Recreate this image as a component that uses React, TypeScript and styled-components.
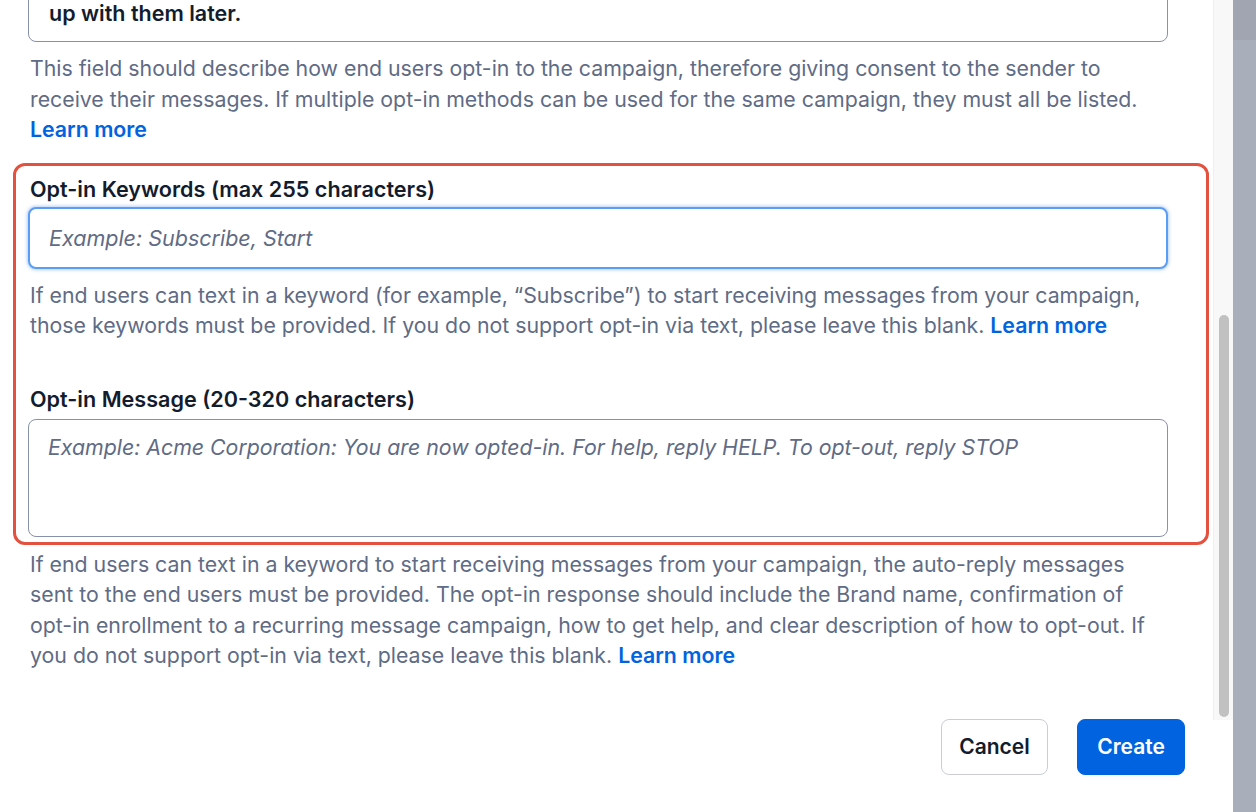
import styled, { createGlobalStyle } from "styled-components"

const GlobalStyle = createGlobalStyle`
  html, body {
    margin: 0;
    padding: 0;
    background: #fff;
    overflow: hidden;
  }
  body {
    font-family: 'Inter', 'Noto Sans', sans-serif;
    color: #121c2d;
  }
`

const Page = styled.div`
  display: flex;
  width: 1256px;
  height: 812px;
  overflow: hidden;
`

const Main = styled.main`
  width: 1213px;
  box-sizing: border-box;
  padding: 0 45px 0 28px;
  display: flex;
  flex-direction: column;
`

const FilledArea = styled.div`
  margin-top: -40px;
  padding: 37px 20px 13px;
  border: 1px solid #8891aa;
  border-radius: 8px;
  font-size: 21.5px;
  font-weight: 600;
  line-height: 30px;
  color: #121c2d;
`

const HelpText = styled.p<{ $top: number }>`
  margin: ${p => p.$top}px 0 0 2px;
  font-size: 21.3px;
  line-height: 30.5px;
  color: #606b85;
`

const Link = styled.a`
  color: #0263e0;
  font-weight: 600;
  text-decoration: none;
`

const Highlight = styled.section`
  margin: 18px -41px 0 -15px;
  padding: 11px 38px 5px 12px;
  border: 3px solid #e2523f;
  border-radius: 12px;
  display: flex;
  flex-direction: column;
`

const Label = styled.label<{ $top?: number }>`
  display: block;
  margin: ${p => p.$top ?? 0}px 0 0 2px;
  font-size: 21.6px;
  font-weight: 600;
  line-height: 24px;
  color: #121c2d;
`

const TextInput = styled.input`
  margin-top: 6px;
  height: 62px;
  box-sizing: border-box;
  padding: 0 19px;
  border: 2px solid #5b9cf5;
  border-radius: 8px;
  box-shadow: 0 0 0 1px #cfe1fb, 0 0 4px rgba(2, 99, 224, 0.45);
  font-family: inherit;
  font-size: 21.5px;
  color: #121c2d;
  outline: none;
  &::placeholder {
    color: #606b85;
    font-style: italic;
  }
`

const TextArea = styled.textarea`
  margin-top: 8px;
  height: 118px;
  box-sizing: border-box;
  padding: 13px 19px;
  border: 1px solid #8891aa;
  border-radius: 8px;
  font-family: inherit;
  font-size: 21.3px;
  line-height: 28px;
  resize: none;
  outline: none;
  &::placeholder {
    color: #606b85;
    font-style: italic;
  }
`

const Footer = styled.footer`
  margin: 48px -17px 0 0;
  display: flex;
  justify-content: flex-end;
  gap: 29px;
`

const Button = styled.button<{ $primary?: boolean }>`
  height: 56px;
  width: ${p => (p.$primary ? 108 : 107)}px;
  padding: 0;
  border-radius: 8px;
  font-family: inherit;
  font-size: 21px;
  font-weight: 600;
  cursor: pointer;
  border: 1px solid ${p => (p.$primary ? "#0263e0" : "#cacdd8")};
  background: ${p => (p.$primary ? "#0263e0" : "#fff")};
  color: ${p => (p.$primary ? "#fff" : "#121c2d")};
`

const ScrollColumn = styled.div`
  width: 20px;
  display: flex;
  flex-direction: column;
`

const Track = styled.div`
  height: 720px;
  background: #f8f8f8;
  border-left: 1px solid #efefef;
  box-sizing: border-box;
  display: flex;
  flex-direction: column;
  align-items: center;
  padding-top: 315px;
`

const Thumb = styled.div`
  width: 10px;
  height: 402px;
  border-radius: 5px;
  background: #c1c1c1;
`

const SidePanel = styled.div`
  flex: 1;
  background: linear-gradient(to bottom, #a1a5b2 0, #a1a5b2 40px, #a9aebb 40px);
`

export default function App() {
  return (
    <>
      <GlobalStyle />
      <Page>
        <Main>
          <FilledArea>up with them later.</FilledArea>
          <HelpText $top={11}>
            This field should describe how end users opt-in to the campaign, therefore giving consent to the sender to
            <br />
            receive their messages. If multiple opt-in methods can be used for the same campaign, they must all be listed.
            <br />
            <Link href="#">Learn more</Link>
          </HelpText>

          <Highlight>
            <Label htmlFor="keywords">Opt-in Keywords (max 255 characters)</Label>
            <TextInput id="keywords" placeholder="Example: Subscribe, Start" />
            <HelpText $top={11}>
              If end users can text in a keyword (for example, “Subscribe”) to start receiving messages from your campaign,
              <br />
              those keywords must be provided. If you do not support opt-in via text, please leave this blank.{" "}
              <Link href="#">Learn more</Link>
            </HelpText>

            <Label htmlFor="message" $top={46}>Opt-in Message (20-320 characters)</Label>
            <TextArea
              id="message"
              placeholder="Example: Acme Corporation: You are now opted-in. For help, reply HELP. To opt-out, reply STOP"
            />
          </Highlight>

          <HelpText $top={4}>
            If end users can text in a keyword to start receiving messages from your campaign, the auto-reply messages
            <br />
            sent to the end users must be provided. The opt-in response should include the Brand name, confirmation of
            <br />
            opt-in enrollment to a recurring message campaign, how to get help, and clear description of how to opt-out. If
            <br />
            you do not support opt-in via text, please leave this blank. <Link href="#">Learn more</Link>
          </HelpText>

          <Footer>
            <Button>Cancel</Button>
            <Button $primary>Create</Button>
          </Footer>
        </Main>
        <ScrollColumn>
          <Track>
            <Thumb />
          </Track>
        </ScrollColumn>
        <SidePanel />
      </Page>
    </>
  )
}
